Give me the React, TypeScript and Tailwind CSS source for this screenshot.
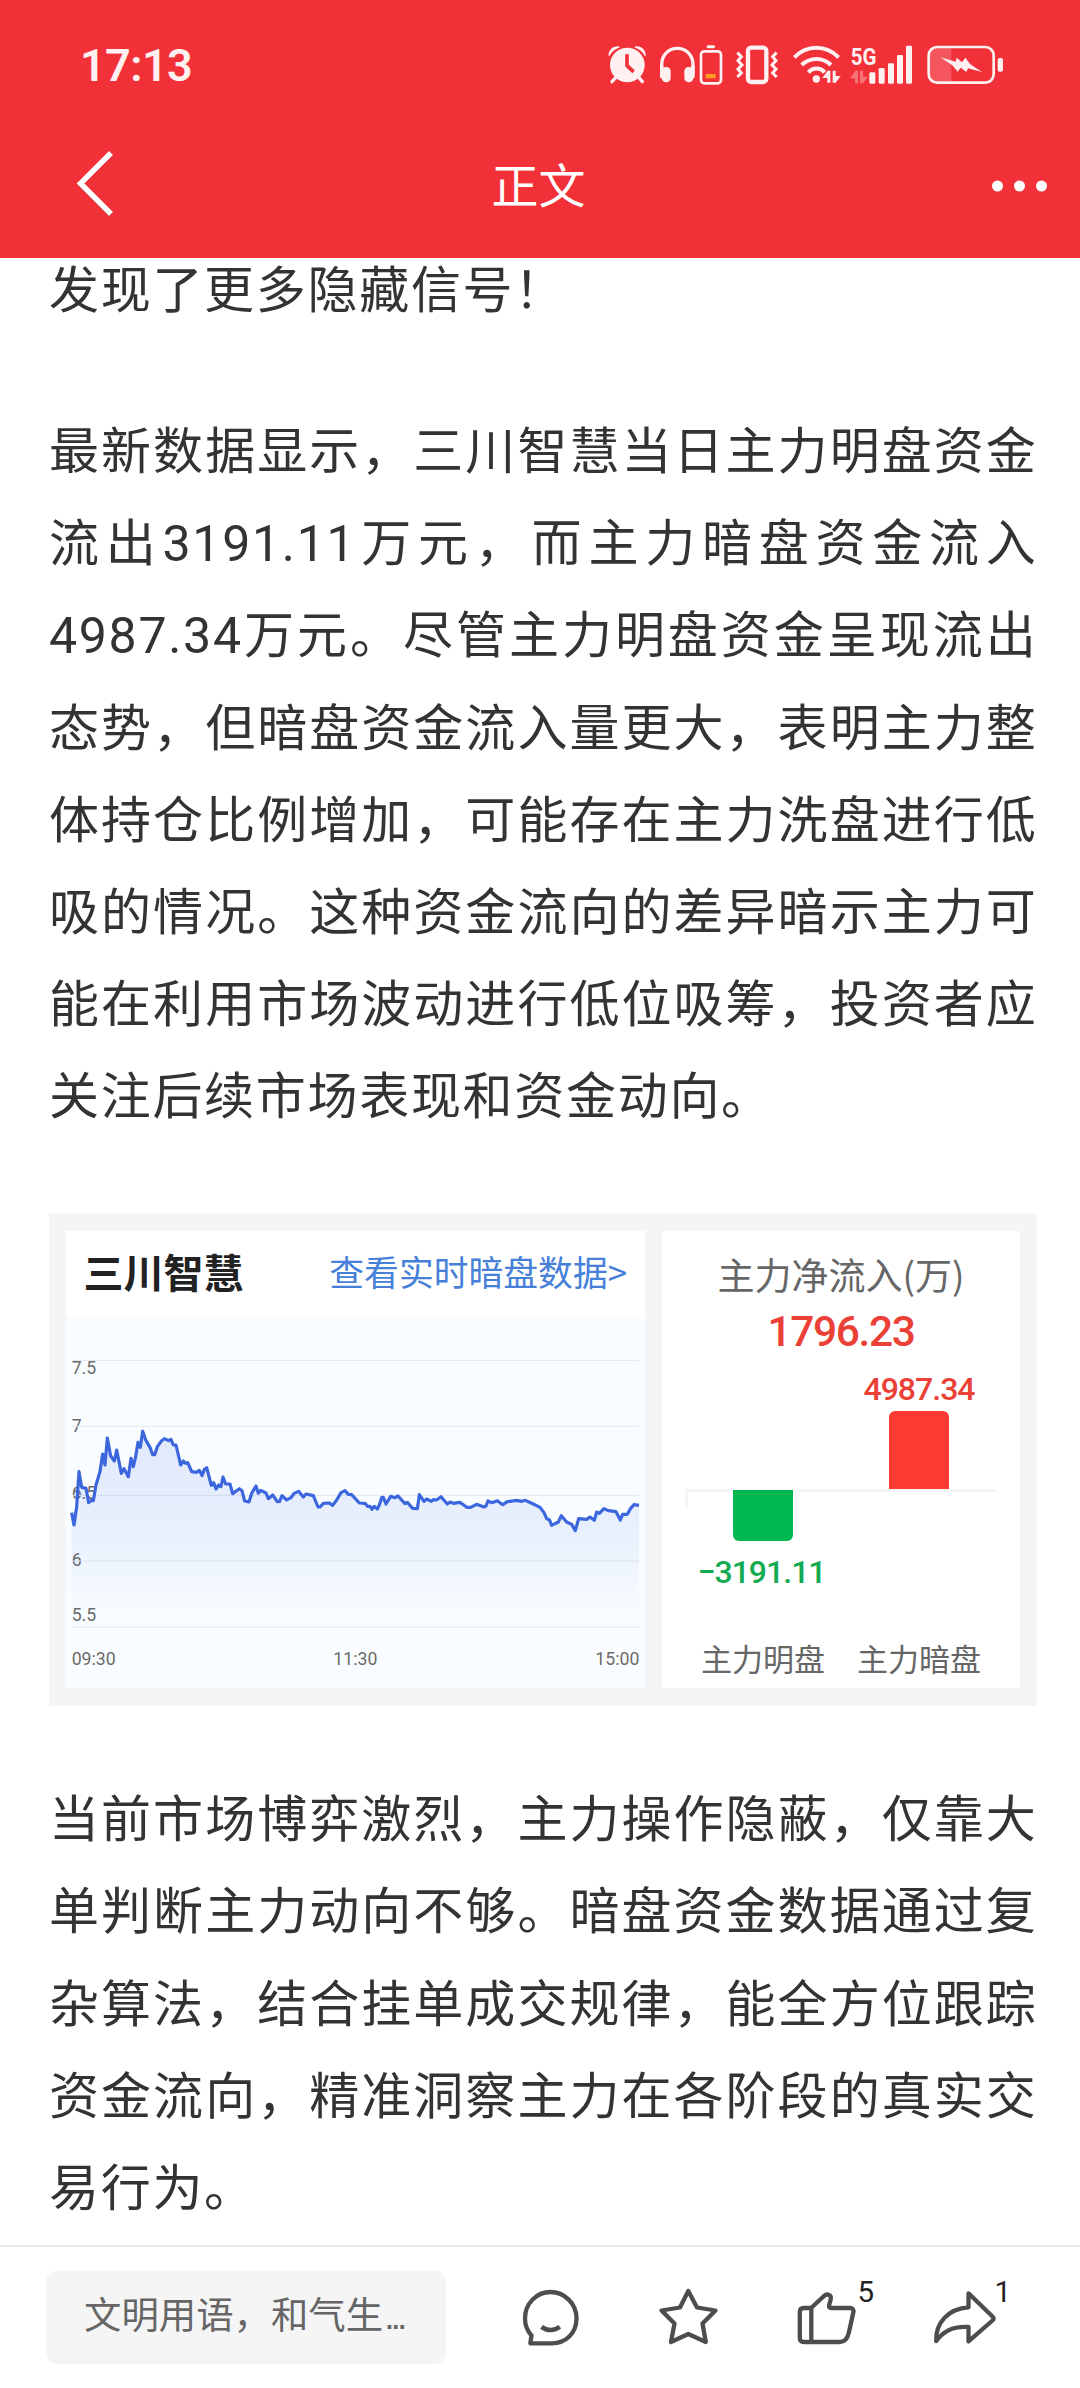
import { ReactNode } from 'react';

const INTRO = ['发现了更多隐藏信号！'];

const FLOW = [
  '最新数据显示，三川智慧当日主力明盘资金',
  '流出3191.11万元，而主力暗盘资金流入',
  '4987.34万元。尽管主力明盘资金呈现流出',
  '态势，但暗盘资金流入量更大，表明主力整',
  '体持仓比例增加，可能存在主力洗盘进行低',
  '吸的情况。这种资金流向的差异暗示主力可',
  '能在利用市场波动进行低位吸筹，投资者应',
  '关注后续市场表现和资金动向。',
];

const SUMMARY = [
  '当前市场博弈激烈，主力操作隐蔽，仅靠大',
  '单判断主力动向不够。暗盘资金数据通过复',
  '杂算法，结合挂单成交规律，能全方位跟踪',
  '资金流向，精准洞察主力在各阶段的真实交',
  '易行为。',
];

// chart space is 1737 x 1113, offset 78 / 351
const PRICES =
  '95,938 102,975 110,920 117,815 125,862 138,865 146,908 153,902 160,902 168,855 180,815 188,762 195,795 202,714 212,768 223,783 230,750 244,820 252,806 265,830 273,775 280,800 287,770 294,727 301,742 308,694 318,722 330,742 338,764 344,764 352,740 365,722 373,716 386,722 393,718 400,735 408,735 415,765 422,795 430,783 437,790 443,788 455,815 470,817 478,811 486,827 493,808 500,803 507,830 514,856 521,848 528,867 536,855 543,860 549,831 557,852 570,852 578,881 598,866 606,872 614,903 627,906 635,880 648,858 655,880 662,871 678,879 685,896 698,885 712,905 719,904 726,887 740,900 754,892 762,880 776,874 790,891 798,882 820,887 834,921 840,921 850,910 868,909 878,916 890,900 903,878 915,872 925,883 935,884 958,909 975,910 983,919 990,919 996,928 1003,919 1012,927 1018,915 1025,893 1030,892 1038,912 1052,889 1065,893 1074,888 1095,911 1102,907 1118,925 1132,926 1138,884 1152,904 1160,897 1174,904 1180,899 1190,900 1203,890 1222,912 1230,906 1240,910 1260,907 1280,922 1292,922 1310,913 1332,921 1338,918 1344,903 1355,908 1372,902 1388,914 1402,905 1430,901 1445,904 1456,901 1480,912 1500,922 1512,938 1520,956 1528,959 1535,976 1555,966 1564,947 1580,966 1595,973 1606,992 1616,956 1640,958 1650,951 1663,961 1670,936 1678,940 1692,926 1705,932 1728,935 1741,960 1748,943 1762,943 1772,925 1782,914 1797,916';

const GRID = [481, 679, 886, 1083, 1281];

const Y_LABELS = [
  { text: '7.5', y: 522 },
  { text: '7', y: 696 },
  { text: '6.5', y: 897 },
  { text: '6', y: 1097 },
  { text: '5.5', y: 1263 },
];

function Paragraph({ lines, className = '' }: { lines: string[]; className?: string }) {
  return (
    <div className={`pr-[42.5px] pl-[49px] font-[Roboto,'Noto_Sans_CJK_SC',sans-serif] text-[50px] tracking-[1.7px] text-[#333333] ${className}`}>
      {lines.map((line, i) => (
        <p
          key={line}
          className={`h-[92.15px] leading-[92px] whitespace-nowrap ${i < lines.length - 1 ? '[text-align-last:justify]' : ''}`}
        >
          {line}
        </p>
      ))}
    </div>
  );
}

function StatusIcons() {
  return (
    <div className="flex h-10 fill-[#fff0f1] stroke-[#fff0f1]">
      {/* alarm */}
      <svg className="h-10 w-[50px]" viewBox="82 44 150 120" stroke="none">
        <circle cx="140" cy="104" r="52" />
        <path d="M84 78C82 58 98 46 114 48L118 51C104 56 94 64 87 76Z M195 78C197 58 181 46 165 48L161 51C175 56 185 64 192 76Z" />
        <path d="M105 142L94 154M175 142L185 154" stroke="#fff0f1" strokeWidth="10" strokeLinecap="round" />
        <path d="M139 77V106L155 121" fill="none" stroke="#f23037" strokeWidth="11" strokeLinecap="square" />
      </svg>
      {/* headset and its battery */}
      <svg className="h-10 w-[76.67px]" viewBox="232 44 230 120">
        <path d="M243 132V104C243 74 264 54 290 54S337 74 337 104V132" fill="none" strokeWidth="10" />
        <rect x="243" y="110" width="27" height="46" rx="13" stroke="none" />
        <rect x="311" y="110" width="27" height="46" rx="13" stroke="none" />
        <rect x="238" y="104" width="10" height="40" rx="4" stroke="none" />
        <rect x="332" y="104" width="10" height="40" rx="4" stroke="none" />
        <rect x="378" y="45" width="25" height="9" rx="4" stroke="none" />
        <rect x="361" y="63" width="60" height="96" rx="10" fill="none" strokeWidth="8" />
        <rect x="375" y="131" width="30" height="13" fill="#ff9a26" stroke="none" />
      </svg>
      {/* vibrate */}
      <svg className="h-10 w-[56.67px]" viewBox="462 44 170 120" fill="none">
        <rect x="504" y="52" width="55" height="103" rx="10" fill="none" strokeWidth="13" />
        <path d="M472 67L484 79L474 91L486 104L474 116L484 128L472 140M590 67L578 79L588 91L576 104L588 116L578 128L590 140" fill="none" strokeWidth="9" />
      </svg>
      {/* wifi */}
      <svg className="h-10 w-[57.33px]" viewBox="632 44 172 120">
        <path d="M642 81C680 43 736 43 775 81M664 104C690 80 727 80 752 104M684 126C698 111 720 111 733 126" fill="none" strokeWidth="12" />
        <circle cx="708" cy="146" r="11" stroke="none" />
        <path d="M741 121V157H750V121H741ZM726 143L741 123V143ZM757 121V157H766V121ZM766 157L781 137H766Z" stroke="none" />
      </svg>
      {/* 5G signal */}
      <svg className="h-10 w-[76px] overflow-visible" viewBox="804 44 228 120" stroke="none">
        <text x="812" y="103" fontSize="73" fontWeight="700" textLength="77" lengthAdjust="spacingAndGlyphs" className="font-[Roboto]">5G</text>
        <path d="M825 121V159H834V121ZM810 144L825 124V144ZM840 121V159H849V121ZM849 159L864 139H849Z" opacity=".35" />
        <rect x="868" y="126" width="18" height="34" rx="4" />
        <rect x="896" y="113" width="18" height="47" rx="4" />
        <rect x="924" y="99" width="18" height="61" rx="4" />
        <rect x="951" y="74" width="18" height="86" rx="4" />
        <rect x="978" y="46" width="18" height="114" rx="4" />
      </svg>
      {/* battery */}
      <svg className="h-10 w-[79.33px]" viewBox="1032 44 238 120">
        <path d="M1114 52H1072Q1046 52 1046 78V128Q1046 154 1072 154H1114Z" fill="#f5565e" stroke="none" />
        <rect x="1046" y="50" width="195" height="107" rx="25" fill="none" strokeWidth="8" />
        <rect x="1253" y="83" width="16" height="41" rx="6" stroke="none" />
        <path d="M1081 81L1127 94L1130 82L1146 96L1156 82L1171 102L1206 125L1164 114L1159 125L1142 112L1133 124L1117 105Z" stroke="none" />
      </svg>
    </div>
  );
}

function Header() {
  return (
    <header className="relative z-10 h-[258px] shrink-0 bg-[#f23037]">
      <div className="flex h-[103px] items-start justify-between pt-[44.5px] pr-[76.5px] pl-[80px]">
        <span className="mt-[3px] font-[Roboto] text-[45px] leading-[36px] font-semibold tracking-[-0.6px] text-[#fff0f1]">17:13</span>
        <StatusIcons />
      </div>
      <div className="mt-[26px] flex h-[110px] items-center justify-between pr-[33px] pl-[70px]">
        <svg className="h-[68px] w-[80px]" viewBox="0 0 80 68" fill="none">
          <path d="M41 4L10.5 34.5L41 65" stroke="#00000030" strokeWidth="5.5" />
          <path d="M41 3L10.5 33.5L41 64" stroke="#fff" strokeWidth="5.5" />
        </svg>
        <h1 className="-translate-x-[1px] -translate-y-[2px] text-[47px] leading-none text-white">正文</h1>
        <div className="flex w-[118px] translate-y-[1.5px] justify-end gap-[11px]">
          <i className="size-[11px] rounded-full bg-white" />
          <i className="size-[11px] rounded-full bg-white" />
          <i className="size-[11px] rounded-full bg-white" />
        </div>
      </div>
    </header>
  );
}

function PriceChart() {
  return (
    <svg className="h-[371px] w-[579px] bg-[#f9fdff]" viewBox="78 351 1737 1113">
      <defs>
        <linearGradient id="area" x1="0" y1="694" x2="0" y2="1260" gradientUnits="userSpaceOnUse">
          <stop offset="0" stopColor="#3b66e8" stopOpacity=".13" />
          <stop offset=".5" stopColor="#3b66e8" stopOpacity=".09" />
          <stop offset="1" stopColor="#3b66e8" stopOpacity="0" />
        </linearGradient>
      </defs>
      <g fill="#6b6b6b" fontSize="53" className="font-[Roboto]">
        {Y_LABELS.map(l => (
          <text key={l.text} x="95" y={l.y}>{l.text}</text>
        ))}
        <text x="95" y="1394">09:30</text>
        <text x="946" y="1394" textAnchor="middle">11:30</text>
        <text x="1798" y="1394" textAnchor="end">15:00</text>
      </g>
      {GRID.map(y => (
        <path key={y} d={`M95 ${y}H1797`} stroke="#e3e6ee" strokeWidth="3" />
      ))}
      <polygon points={`95,1281 ${PRICES} 1797,1281`} fill="url(#area)" />
      <polyline points={PRICES} fill="none" stroke="#3b66dd" strokeWidth="9.5" strokeLinejoin="round" />
    </svg>
  );
}

function FlowBars() {
  return (
    <div className="flex w-[358px] flex-col items-center bg-white pt-[21px] text-[#666666]">
      <div className="h-[47px] text-[37px] leading-[44px]">主力净流入(万)</div>
      <div className="h-[62px] font-[Roboto] text-[42.5px] leading-[66px] font-medium tracking-[-1.4px] text-[#ea4036]">1796.23</div>
      <div className="flex w-[312px] flex-1">
        <div className="flex w-1/2 flex-col items-center">
          <div className="mt-[128px] h-[3px] w-full border-l-3 border-[#f5f5f5] bg-[#f5f5f5]" />
          <div className="flex h-[16px] w-full justify-start border-l-3 border-[#f5f5f5]">
            <div className="-mt-[2px] ml-[45px] h-[51px] w-[60px] rounded-b-[6px] bg-[#00b850]" />
          </div>
          <div className="mt-[42px] mr-[3px] font-[Roboto] text-[32px] leading-[44px] font-medium tracking-[-1px] whitespace-nowrap text-[#14aa52]">−3191.11</div>
          <div className="mt-[42px] text-[31px] leading-[44px] whitespace-nowrap">主力明盘</div>
        </div>
        <div className="flex w-1/2 flex-col items-center">
          <div className="mt-[6px] h-[44px] font-[Roboto] text-[32px] leading-[44px] font-medium tracking-[-1px] text-[#ea4036]">4987.34</div>
          <div className="h-[79px] w-[60px] rounded-t-[6px] bg-[#fc3a31]" />
          <div className="-mt-[1px] h-[3px] w-full bg-[#f5f5f5]" />
          <div className="mt-[144px] text-[31px] leading-[44px] whitespace-nowrap">主力暗盘</div>
        </div>
      </div>
    </div>
  );
}

function StockPanel() {
  return (
    <section className="mt-[70px] ml-[49px] flex h-[493px] w-[988px] gap-[17px] bg-[#f5f5f5] px-[17px] py-[18px]">
      <div className="w-[579px] bg-white">
        <div className="flex h-[86px] items-center justify-between pr-[18px] pb-[7px] pl-[17.5px]">
          <b className="text-[40px] text-[#222222]">三川智慧</b>
          <a className="text-[34.8px] text-[#4680d8]">查看实时暗盘数据&gt;</a>
        </div>
        <PriceChart />
      </div>
      <FlowBars />
    </section>
  );
}

function Action({ children, count }: { children: ReactNode; count?: string }) {
  return (
    <button className="relative h-[64px] w-[68px]">
      <svg className="size-full overflow-visible" viewBox="0 0 68 64" fill="none" stroke="#4d4d4d" strokeWidth="4.3" strokeLinejoin="round" strokeLinecap="round">
        {children}
      </svg>
      {count && <span className="absolute -top-[10px] left-[67.5px] font-[Roboto] text-[29.5px] leading-[34px] text-[#222222]">{count}</span>}
    </button>
  );
}

function BottomBar() {
  return (
    <footer className="flex h-[143px] shrink-0 items-start border-t-2 border-[#ebebeb] bg-white pt-[24px] pl-[46px]">
      <div className="h-[93px] w-[400px] rounded-[11px] bg-[#f5f5f5] pl-[38px] text-[37.4px] leading-[85px] whitespace-nowrap text-[#666666]">
        文明用语，和气生<span className="ml-[1px] font-['Liberation_Sans'] tracking-[-4px]">...</span>
      </div>
      <div className="mt-[14px] ml-[70px] flex gap-[69px]">
        <Action>
          <path d="M15.5 50.5C11 45.5 9 39.5 9 33.5C9 18.5 20.5 7 34.5 7S60.5 18.5 60.5 33.5S49.5 58.3 36 58.3H14.3L15.5 50.5Z" />
          <path d="M25.5 41.8C31 46 38.5 46 43.8 41.8" strokeWidth="4.6" strokeLinecap="butt" />
        </Action>
        <Action>
          <path d="M35.3 6L44 22.5L62.5 25.5L49.5 38.5L52.8 57L35.3 49L18 57L21.5 38.5L8.5 25.5L27 22.5Z" />
        </Action>
        <Action count="5">
          <path d="M14 23H21L34 11C37.5 8 41.5 10 40.8 14L39 21Q38.8 23 41 23H60C63 23 64 25 63.3 27.5L59 47C57.5 54 55 57 50 57H14C11 57 9.8 55.5 9.8 53V27C9.8 24.5 11 23 14 23ZM21.3 23V57" />
        </Action>
        <Action count="1">
          <path d="M41.5 8.3L65.5 31.5Q67.5 33.5 65.5 35.5L41.5 56.3V42C27 41 17 45 9.2 56C8.5 38 21 23.5 41.5 22.3Z" />
        </Action>
      </div>
    </footer>
  );
}

export default function App() {
  return (
    <div className="flex h-[2388px] w-[1080px] flex-col overflow-hidden bg-white font-['Noto_Sans_CJK_SC',sans-serif]">
      <Header />
      <main className="min-h-0 flex-1">
        <Paragraph lines={INTRO} className="-mt-[13px]" />
        <Paragraph lines={FLOW} className="mt-[69px]" />
        <StockPanel />
        <Paragraph lines={SUMMARY} className="mt-[68px]" />
      </main>
      <BottomBar />
    </div>
  );
}
